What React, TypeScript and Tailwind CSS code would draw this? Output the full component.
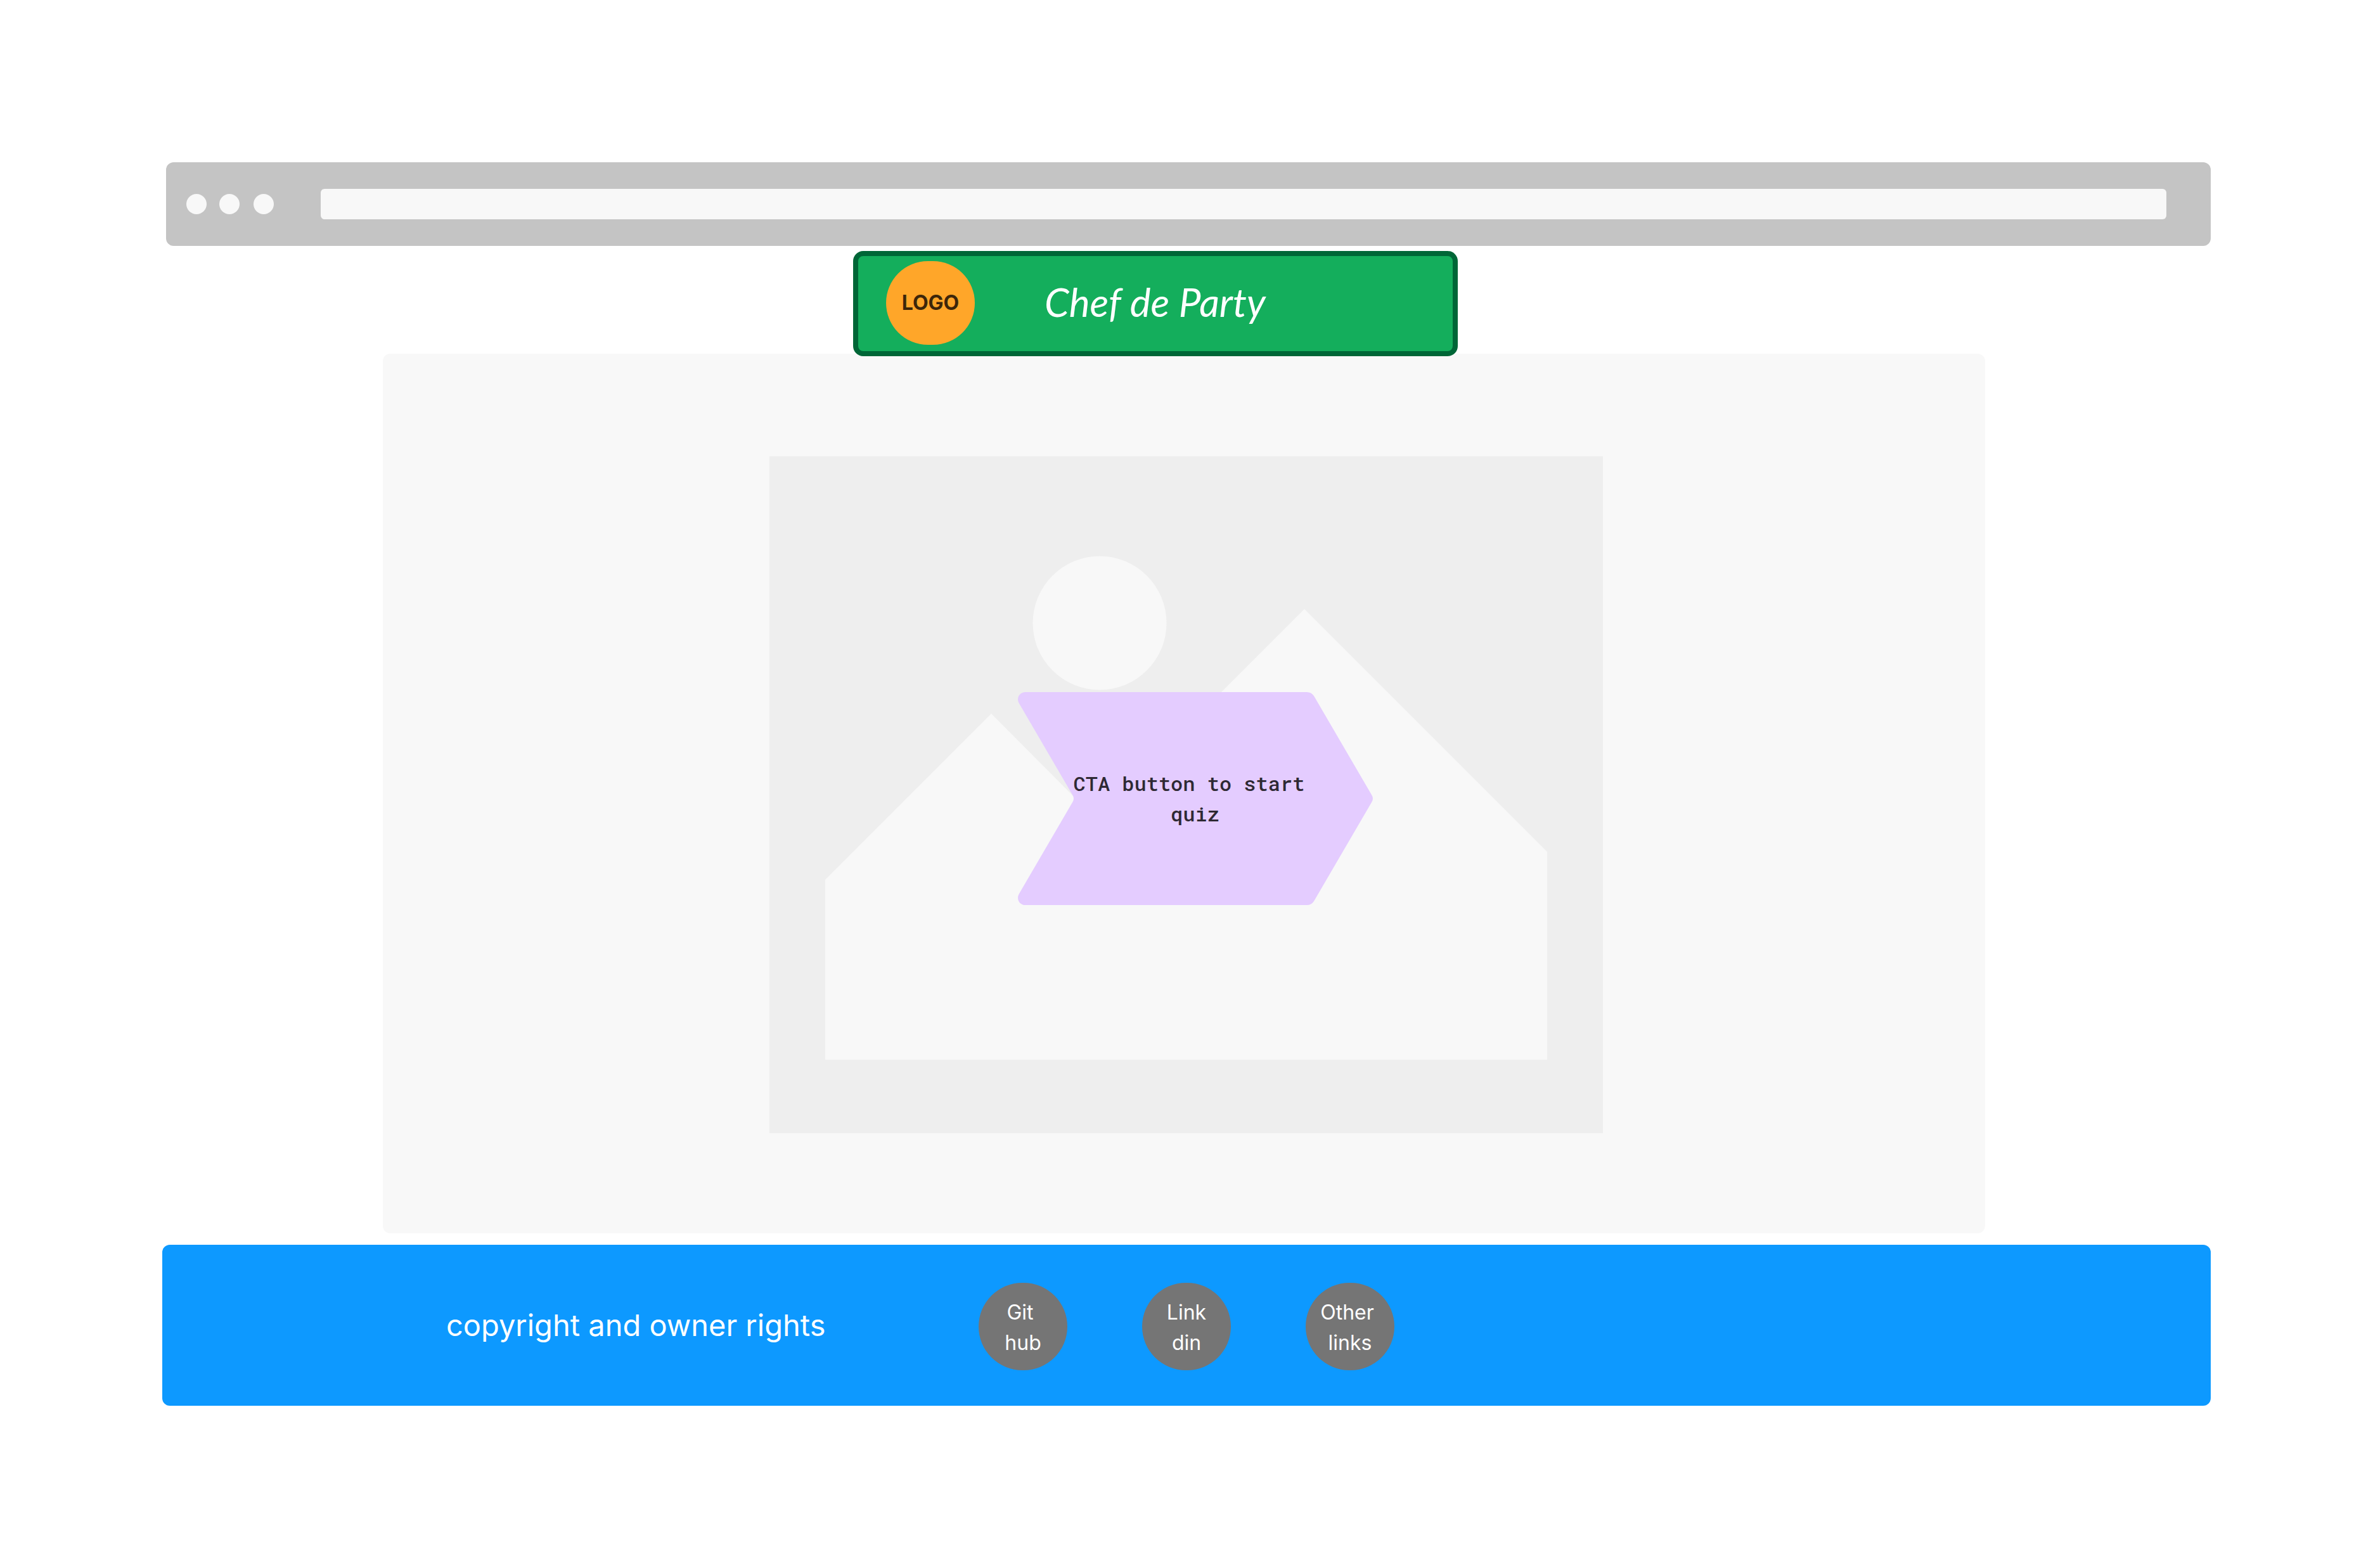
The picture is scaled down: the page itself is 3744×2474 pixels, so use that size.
import React from "react";

const SANS = "font-['Inter',sans-serif]";

function BrowserBar() {
  return (
    <div className="ml-1.5 flex h-[132px] items-center rounded-xl bg-[#c4c4c4] pl-8 pr-[70px]">
      <div className="flex items-center">
        <span className="size-8 rounded-full bg-[#f8f8f8]" />
        <span className="ml-5 size-8 rounded-full bg-[#f8f8f8]" />
        <span className="ml-[22px] size-8 rounded-full bg-[#f8f8f8]" />
      </div>
      <input
        type="text"
        aria-label="Address"
        className="ml-[74px] h-12 min-w-0 flex-1 rounded-md bg-[#f8f8f8] px-4 text-2xl outline-none"
      />
    </div>
  );
}

function SiteHeader() {
  return (
    <header className="relative z-10 -mb-1 mr-[98px] mt-2 flex h-[166px] w-[954px] items-start self-center rounded-2xl border-8 border-[#006637] bg-[#14ae5c] pl-11 pt-2">
      <div className="flex h-[132px] w-[140px] items-center justify-center rounded-full bg-[#ffa629] text-[32px] leading-[48px] font-bold text-[#3d260a]">
        LOGO
      </div>
      <h1 className="ml-[110px] mt-6 font-['Lato',cursive] text-[62px] leading-[80px] font-normal text-white italic">
        Chef de Party
      </h1>
    </header>
  );
}

function PlaceholderPicture() {
  return (
    <svg viewBox="0 0 1315 1068" className="col-start-1 row-start-1 w-full" role="img" aria-label="Picture placeholder">
      <rect width="1315" height="1068" fill="#eeeeee" />
      <circle cx="521" cy="263" r="105.5" fill="#f8f8f8" />
      <path d="M88 668 L350 406 L514 571 L844 241 L1227 624 V952 H88 Z" fill="#f8f8f8" />
    </svg>
  );
}

function StartButton() {
  return (
    <button
      type="button"
      className="relative col-start-1 row-start-1 mt-3 ml-7 grid h-[336px] w-[560px] cursor-pointer place-items-center"
    >
      <svg viewBox="0 0 560 336" className="col-start-1 row-start-1 size-full" aria-hidden="true">
        <path
          d="M12 0 H456 Q463 0 467 6 L558 162 Q562 168 558 174 L467 330 Q463 336 456 336 H12 C2 336 -3 326 2 318 L86 174 Q90 168 86 162 L2 18 C-3 10 2 0 12 0 Z"
          fill="#e4ccff"
        />
      </svg>
      <span className="col-start-1 row-start-1 font-['Roboto_Mono','DejaVu_Sans_Mono',monospace] text-[32px] leading-[48px] font-medium whitespace-pre text-[#2e2933]">
        {"CTA button to start \nquiz"}
      </span>
    </button>
  );
}

const links = ["Git \nhub", "Link\ndin", "Other \nlinks"];

function SiteFooter() {
  return (
    <footer className="mt-[18px] flex h-[254px] items-center rounded-xl bg-[#0d99ff] pl-[448px] text-white">
      <p className="w-[840px] text-[47px] leading-[64px]">copyright and owner rights</p>
      <nav className="mt-1 flex gap-[118px]">
        {links.map((label) => (
          <a
            key={label}
            href="#"
            className="flex h-[138px] w-[140px] items-center justify-center rounded-full bg-[#757575] pt-1 text-center text-[32px] leading-[48px] whitespace-pre"
          >
            {label}
          </a>
        ))}
      </nav>
    </footer>
  );
}

export default function App() {
  return (
    <div className={`flex min-h-screen flex-col bg-white px-64 pt-64 ${SANS}`}>
      <BrowserBar />
      <SiteHeader />
      <main className="mr-[356px] ml-[348px] flex justify-center rounded-xl bg-[#f8f8f8] pt-[162px] pb-[158px]">
        <div className="ml-[7px] grid w-[1315px] place-items-center">
          <PlaceholderPicture />
          <StartButton />
        </div>
      </main>
      <SiteFooter />
    </div>
  );
}
